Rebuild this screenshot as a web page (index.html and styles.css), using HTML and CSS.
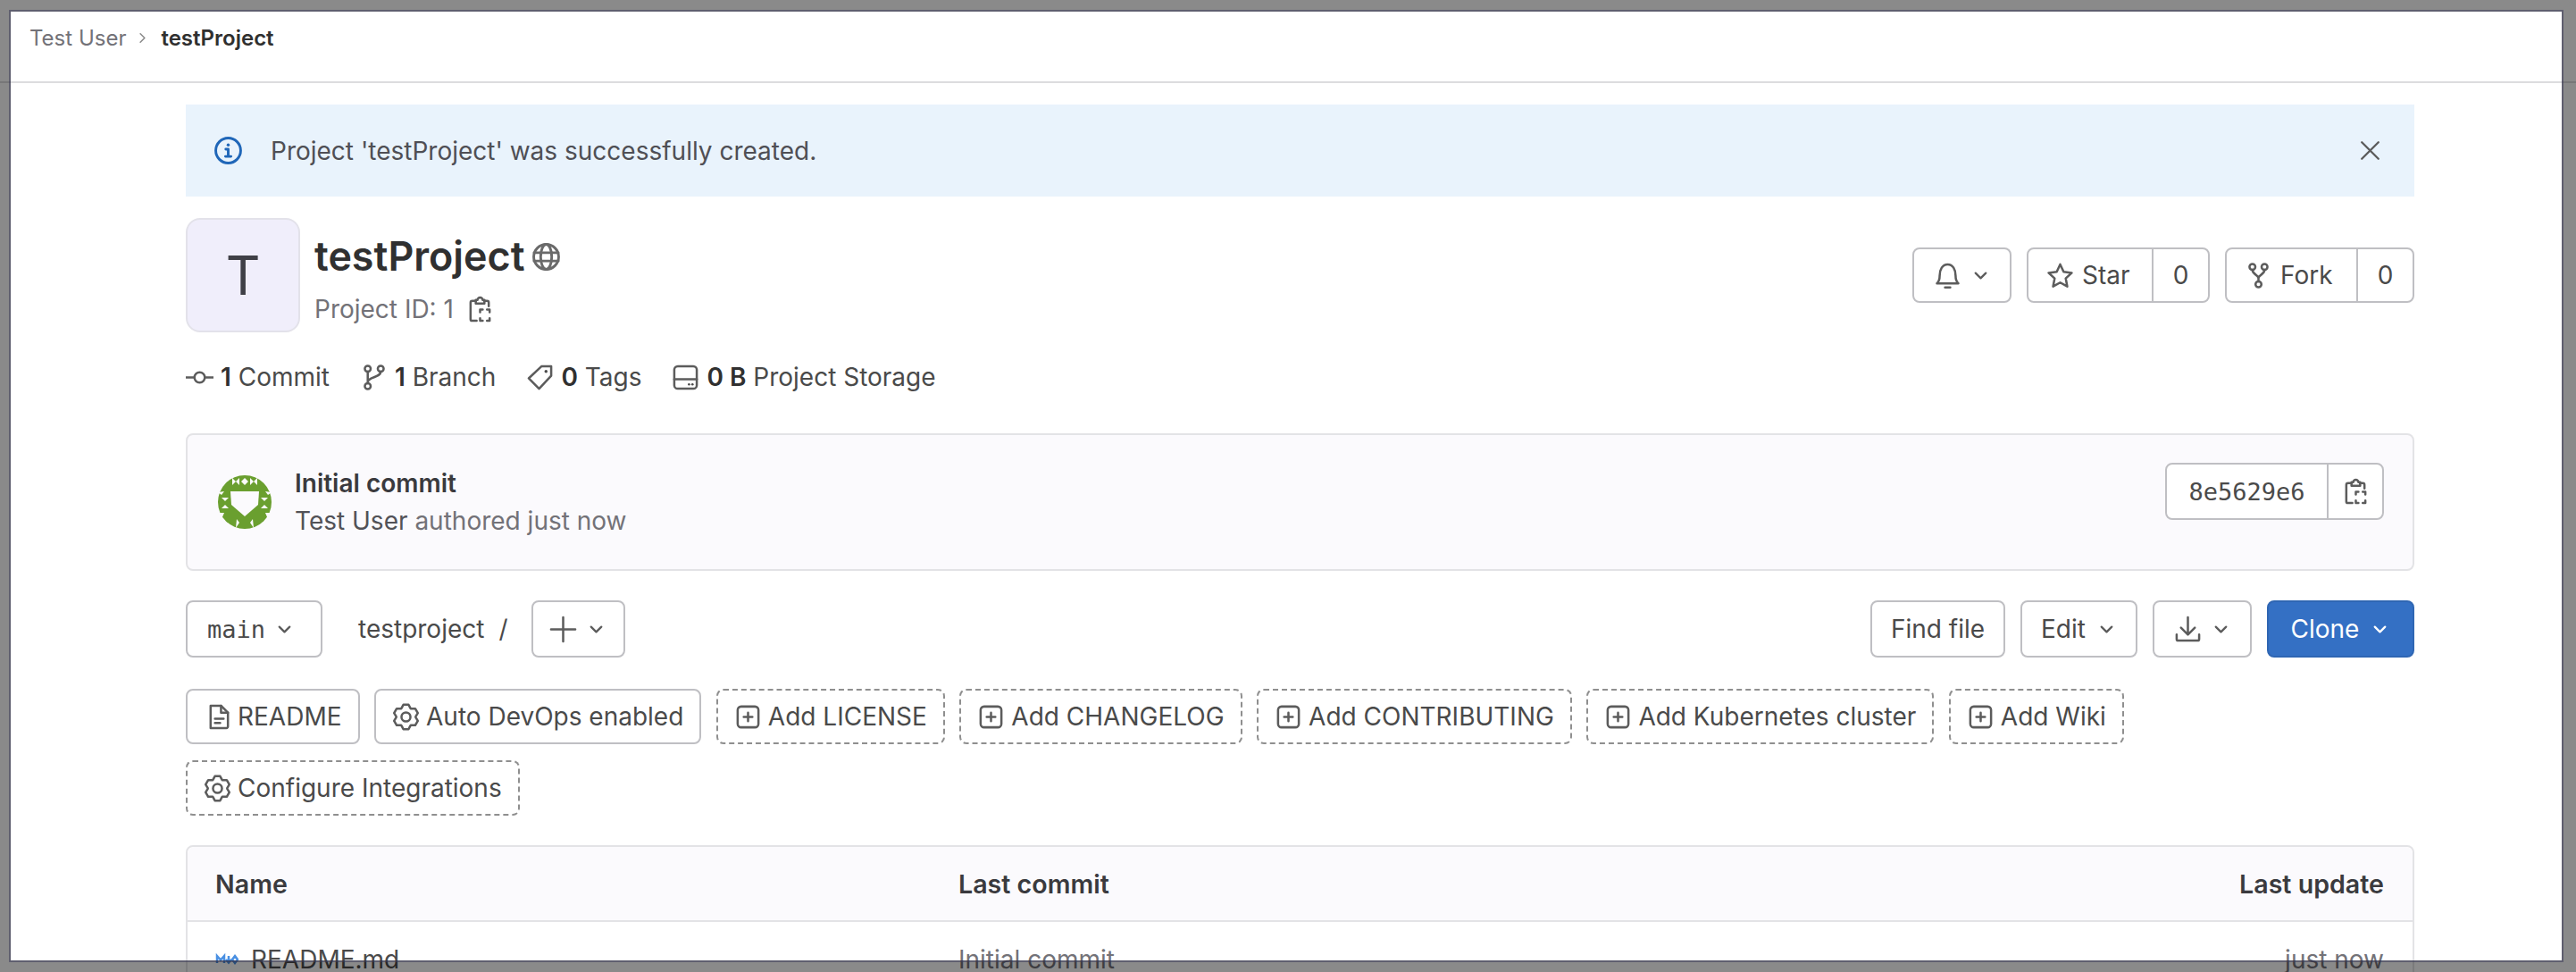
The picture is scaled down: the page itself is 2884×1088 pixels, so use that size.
FILE: index.html
```html
<!DOCTYPE html>
<html lang="en">

<head>
  <meta charset="UTF-8">
  <title>testProject</title>
  <link rel="stylesheet" href="styles.css">
</head>

<body>
  <svg class="sprite" xmlns="http://www.w3.org/2000/svg">
    <symbol id="i-chevron" viewBox="0 0 16 16"><path d="M4 6l4 4 4-4"/></symbol>
    <symbol id="i-chevron-right" viewBox="0 0 16 16"><path d="M6 4l4 4-4 4"/></symbol>
    <symbol id="i-info" viewBox="0 0 16 16"><circle cx="8" cy="8" r="7.2"/><path d="M6.6 7.2H8v4M6.4 11.4h3.2"/><circle class="dot" cx="8" cy="4.8" r=".9"/></symbol>
    <symbol id="i-close" viewBox="0 0 16 16"><path d="M2.5 2.5l11 11M13.5 2.5l-11 11"/></symbol>
    <symbol id="i-globe" viewBox="0 0 16 16"><circle cx="8" cy="8" r="7.2"/><ellipse cx="8" cy="8" rx="3.2" ry="7.2"/><path d="M1 5.6h14M1 10.4h14"/></symbol>
    <symbol id="i-copy" viewBox="0 0 16 16"><path d="M5.5 2.5h1a1.5 1.5 0 0 1 3 0h1v2h-5z"/><path d="M5.5 3H3.500a1 1 0 0 0-1 1v9.500a1 1 0 0 0 1 1H6M10.500 3H12a1 1 0 0 1 1 1v2"/><path d="M8 9.500V8h1.500M12 8h1.500v1.500M8 13v1.500h1.500M12 14.500h1.500V13"/></symbol>
    <symbol id="i-bell" viewBox="0 0 16 16"><path d="M1.800 12.500c1.200-1 1.600-2.200 1.600-4.500C3.400 4.500 5 1.500 8 1.500s4.600 3 4.600 6.500c0 2.300.4 3.500 1.600 4.500z"/><path d="M6.500 14.800h3"/></symbol>
    <symbol id="i-star" viewBox="0 0 16 16"><path d="M8 1.500l2 4.300 4.700.6-3.500 3.200.9 4.700L8 12l-4.100 2.300.9-4.700L1.300 6.400 6 5.800z"/></symbol>
    <symbol id="i-fork" viewBox="0 0 16 16"><circle cx="4.500" cy="3" r="1.700"/><circle cx="11.500" cy="3" r="1.700"/><circle cx="8" cy="13" r="1.700"/><path d="M4.500 4.700C4.500 7.500 8 7.500 8 9.500v1.800M11.500 4.700C11.500 7.500 8 7.500 8 9.500"/></symbol>
    <symbol id="i-commit" viewBox="0 0 16 16"><circle cx="8" cy="8" r="3"/><path d="M0 8h5M11 8h5"/></symbol>
    <symbol id="i-branch" viewBox="0 0 16 16"><circle cx="4.500" cy="3" r="1.700"/><circle cx="4.500" cy="13" r="1.700"/><circle cx="12" cy="3" r="1.700"/><path d="M4.500 4.700v6.600M12 4.700c0 3.500-7.500 2.800-7.500 6"/></symbol>
    <symbol id="i-tag" viewBox="0 0 16 16"><path d="M9 1.500h5.500V7L7.500 14.500 1.500 8.500z"/><circle class="dot" cx="11.500" cy="4.500" r=".9"/></symbol>
    <symbol id="i-storage" viewBox="0 0 16 16"><rect x="1.500" y="1.500" width="13" height="13" rx="2"/><path d="M1.500 9h13"/><circle class="dot" cx="10" cy="12" r=".7"/><circle class="dot" cx="12" cy="12" r=".7"/></symbol>
    <symbol id="i-doc" viewBox="0 0 16 16"><path d="M3 1.500h6l4 4v8a1 1 0 0 1-1 1H3z"/><path d="M9 1.500v4h4M5.500 9h5M5.500 11.500h3"/></symbol>
    <symbol id="i-gear" viewBox="0 0 16 16"><path d="M5.37 3.06L6.5.96h3l1.130 2.100.34.190 2.380-.070 1.500 2.600-1.250 2.020v.4l1.250 2.020-1.500 2.600-2.380-.070-.34.190-1.130 2.100h-3l-1.130-2.100-.34-.190-2.380.070-1.500-2.600 1.250-2.020v-.4L1.150 5.780l1.500-2.600 2.380.070z"/><circle cx="8" cy="8" r="2.600"/></symbol>
    <symbol id="i-add" viewBox="0 0 16 16"><rect x="2" y="2" width="12" height="12" rx="2"/><path d="M8 5.500v5M5.500 8h5"/></symbol>
    <symbol id="i-download" viewBox="0 0 16 16"><path d="M8 1v9.500M4 7l4 4 4-4M1.500 11v2.500a1 1 0 0 0 1 1h11a1 1 0 0 0 1-1V11"/></symbol>
    <symbol id="i-plus" viewBox="0 0 16 16"><path d="M8 1v14M1 8h14"/></symbol>
  </svg>

  <header class="top-bar">
    <span class="crumb">Test User</span>
    <svg class="icon crumb-sep"><use href="#i-chevron-right"/></svg>
    <strong class="crumb-current">testProject</strong>
  </header>

  <main class="content">
    <div class="alert">
      <svg class="icon alert-icon"><use href="#i-info"/></svg>
      <span class="alert-text">Project 'testProject' was successfully created.</span>
      <svg class="icon alert-close"><use href="#i-close"/></svg>
    </div>

    <section class="project-head">
      <div class="project-avatar">T</div>
      <div class="project-title">
        <h1>testProject <svg class="icon"><use href="#i-globe"/></svg></h1>
        <p>Project ID: 1 <svg class="icon"><use href="#i-copy"/></svg></p>
      </div>
      <div class="project-actions">
        <button class="btn bell-btn"><svg class="icon"><use href="#i-bell"/></svg><svg class="icon chev"><use href="#i-chevron"/></svg></button>
        <div class="btn-group star-group">
          <button class="btn"><svg class="icon"><use href="#i-star"/></svg>Star</button>
          <span class="btn count">0</span>
        </div>
        <div class="btn-group fork-group">
          <button class="btn"><svg class="icon"><use href="#i-fork"/></svg>Fork</button>
          <span class="btn count">0</span>
        </div>
      </div>
    </section>

    <ul class="stats">
      <li><svg class="icon"><use href="#i-commit"/></svg><b>1</b> Commit</li>
      <li><svg class="icon"><use href="#i-branch"/></svg><b>1</b> Branch</li>
      <li><svg class="icon"><use href="#i-tag"/></svg><b>0</b> Tags</li>
      <li><svg class="icon"><use href="#i-storage"/></svg><b>0 B</b> Project Storage</li>
    </ul>

    <section class="commit-box">
      <svg class="commit-avatar" viewBox="0 0 60 60">
        <circle class="ring" cx="30" cy="30" r="30"/>
        <!-- white parts of the identicon -->
        <path class="cut" d="M14 18h32l-1 15-15 13-15-13z"/>
        <path class="cut" d="M30 3l4 4-4 4-4-4zM16 3l4 4-4 4zM24 3l-4 4 4 4zM44 3l-4 4 4 4zM36 3l4 4-4 4z"/>
        <path class="cut" d="M4 25l4 4 4-4zM4 37l4-4 4 4zM56 25l-4 4-4-4zM56 37l-4-4-4 4z"/>
        <path class="cut" d="M0 19l7-1-3 4zM60 19l-7-1 3 4zM0 42l7 0-3 7zM60 42l-7 0 3 7zM21 49l3 4-4 6zM39 49l-3 4 4 6z"/>
      </svg>
      <div class="commit-info">
        <strong>Initial commit</strong>
        <p><span class="commit-author">Test User</span> authored just now</p>
      </div>
      <div class="btn-group sha-group">
        <span class="btn sha">8e5629e6</span>
        <button class="btn sha-copy"><svg class="icon"><use href="#i-copy"/></svg></button>
      </div>
    </section>

    <section class="repo-bar">
      <button class="btn mono-btn">main<svg class="icon chev"><use href="#i-chevron"/></svg></button>
      <span class="repo-path">testproject</span>
      <span class="repo-slash">/</span>
      <button class="btn plus-btn"><svg class="icon"><use href="#i-plus"/></svg><svg class="icon chev"><use href="#i-chevron"/></svg></button>
      <div class="repo-actions">
        <button class="btn find-btn">Find file</button>
        <button class="btn edit-btn">Edit<svg class="icon chev"><use href="#i-chevron"/></svg></button>
        <button class="btn dl-btn"><svg class="icon"><use href="#i-download"/></svg><svg class="icon chev"><use href="#i-chevron"/></svg></button>
        <button class="btn clone-btn">Clone<svg class="icon chev"><use href="#i-chevron"/></svg></button>
      </div>
    </section>

    <section class="shortcuts">
      <a class="btn pill readme"><svg class="icon"><use href="#i-doc"/></svg>README</a>
      <a class="btn pill"><svg class="icon"><use href="#i-gear"/></svg>Auto DevOps enabled</a>
      <a class="btn pill dashed"><svg class="icon"><use href="#i-add"/></svg>Add LICENSE</a>
      <a class="btn pill dashed"><svg class="icon"><use href="#i-add"/></svg>Add CHANGELOG</a>
      <a class="btn pill dashed"><svg class="icon"><use href="#i-add"/></svg>Add CONTRIBUTING</a>
      <a class="btn pill dashed"><svg class="icon"><use href="#i-add"/></svg>Add Kubernetes cluster</a>
      <a class="btn pill dashed"><svg class="icon"><use href="#i-add"/></svg>Add Wiki</a>
      <a class="btn pill dashed"><svg class="icon"><use href="#i-gear"/></svg>Configure Integrations</a>
    </section>

    <section class="file-table">
      <div class="file-row file-head">
        <span>Name</span>
        <span>Last commit</span>
        <span class="when">Last update</span>
      </div>
      <div class="file-row">
        <span class="file-name"><svg class="md-icon" viewBox="0 0 26 16"><path d="M2 12V4l4 4.500L10 4v8M15 4v6M12 8l3 3.500L18 8M22 4l3 4-3 4-3-4z"/></svg>README.md</span>
        <span class="muted">Initial commit</span>
        <span class="when muted">just now</span>
      </div>
    </section>
  </main>

  <div class="frame"></div>
</body>

</html>
```

FILE: styles.css
```css
* {
  box-sizing: border-box;
  margin: 0;
  padding: 0;
}

html,
body {
  width: 2884px;
  height: 1088px;
  overflow: hidden;
}

body {
  position: relative;
  background: white;
  color: #303030;
  font-family: Inter, "Noto Sans", sans-serif;
  font-size: 28px;
}

.sprite {
  display: none;
}

.icon {
  width: 31px;
  height: 31px;
  flex: none;
  fill: none;
  stroke: #5c5c5c;
  stroke-width: 1.3;
  stroke-linecap: round;
  stroke-linejoin: round;
}

.dot {
  fill: currentColor;
  stroke: none;
}

.chev {
  width: 23px;
  height: 23px;
  stroke-width: 1.6;
}

/* overlay of the grey window edge */
.frame {
  position: absolute;
  inset: 0;
  border-style: solid;
  border-width: 13px 16px 13px 12px;
  border-color: rgba(0, 0, 0, 0.46);
  pointer-events: none;
}

.frame::after {
  content: "";
  position: absolute;
  inset: -2px;
  border: 2px solid rgba(60, 60, 90, 0.55);
}

.top-bar {
  height: 93px;
  padding: 0 0 6px 33px;
  border-bottom: 2px solid #dcdcde;
  display: flex;
  align-items: center;
  font-size: 24px;
}

.crumb {
  color: #737278;
}

.crumb-sep {
  width: 19px;
  height: 19px;
  margin: 0 11px 0 9px;
  stroke: #8a8a8a;
}

.crumb-current {
  font-weight: 600;
  color: #303030;
}

.content {
  width: 2495px;
  margin-left: 208px;
}

.alert {
  height: 103px;
  margin-top: 24px;
  padding: 0 36px 0 32px;
  background: #e9f3fc;
  display: flex;
  align-items: center;
  color: #4f4f55;
}

.alert-icon {
  stroke: #1f66b8;
  color: #1f66b8;
  stroke-width: 1.5;
  margin-right: 32px;
}

.alert-close {
  width: 27px;
  height: 27px;
  margin-left: auto;
  stroke-width: 1.4;
}

.project-head {
  margin-top: 24px;
  display: flex;
}

.project-avatar {
  width: 128px;
  height: 128px;
  border: 2px solid #e3e2ea;
  border-radius: 16px;
  background: #f0eefb;
  display: flex;
  align-items: center;
  justify-content: center;
  font-size: 60px;
  color: #3f3f46;
}

.project-title {
  margin-left: 16px;
  padding-top: 14px;
}

.project-title h1 {
  display: flex;
  align-items: center;
  gap: 9px;
  font-size: 44.8px;
  font-weight: 600;
  line-height: 58px;
}

.project-title h1 .icon {
  stroke-width: 1.5;
  stroke: #6a6a6a;
}

.project-title p {
  display: flex;
  align-items: center;
  gap: 14px;
  margin-top: 13px;
  color: #737278;
}

.project-actions {
  margin-left: auto;
  padding-top: 33px;
  display: flex;
  gap: 17px;
}

.btn {
  height: 62px;
  padding: 0 20px;
  border: 2px solid #bfbfc3;
  border-radius: 8px;
  background: white;
  display: inline-flex;
  align-items: center;
  font: inherit;
  color: #4a4a4a;
}

.bell-btn {
  width: 111px;
  gap: 10px;
  justify-content: center;
  padding: 0;
}

.btn-group {
  display: flex;
}

.btn-group .btn:first-child {
  border-top-right-radius: 0;
  border-bottom-right-radius: 0;
}

.btn-group .btn:last-child {
  margin-left: -2px;
  border-top-left-radius: 0;
  border-bottom-left-radius: 0;
}

.btn-group .btn svg {
  margin-right: 9px;
}

.star-group .btn:first-child {
  width: 142px;
}

.fork-group .btn:first-child {
  width: 149px;
}

.count {
  width: 65px;
  justify-content: center;
  padding: 0;
}

.stats {
  margin-top: 30px;
  list-style: none;
  display: flex;
  gap: 34px;
  height: 40px;
  align-items: center;
  color: #4a4a4a;
}

.stats li {
  display: flex;
  align-items: center;
  white-space: pre;
}

.stats li svg {
  margin-right: 8px;
}

.stats b {
  font-weight: 600;
  color: #303030;
}

.commit-box {
  height: 154px;
  margin-top: 43px;
  padding: 0 32px 0 34px;
  border: 2px solid #e3e3e6;
  border-radius: 8px;
  background: #fbfafd;
  display: flex;
  align-items: center;
}

.commit-avatar {
  width: 60px;
  height: 60px;
  flex: none;
}

.ring {
  fill: #6a9f2f;
}

.cut {
  fill: #fbfafd;
}

.commit-info {
  margin-left: 26px;
  color: #737278;
}

.commit-info strong {
  display: block;
  font-weight: 600;
  color: #3a3a3e;
}

.commit-info p {
  margin-top: 8px;
}

.commit-author {
  color: #525257;
}

.sha-group {
  margin-left: auto;
  align-self: flex-start;
  margin-top: 31px;
}

.sha {
  width: 183px;
  height: 64px;
  justify-content: center;
  padding: 0;
  font-family: "DejaVu Sans Mono", monospace;
  font-size: 27px;
}

.sha-copy {
  width: 64px;
  height: 64px;
  justify-content: center;
  padding: 0;
}

.sha-copy svg {
  margin: 0 !important;
}

.repo-bar {
  margin-top: 33px;
  display: flex;
  align-items: center;
  color: #4a4a4a;
}

.repo-bar .btn {
  height: 64px;
}

.mono-btn {
  width: 153px;
  gap: 10px;
  padding: 0 0 0 22px;
  font-family: "DejaVu Sans Mono", monospace;
  font-size: 27px;
}

.repo-path {
  margin-left: 40px;
}

.repo-slash {
  margin-left: 16px;
}

.plus-btn {
  width: 105px;
  margin-left: 26px;
  padding: 0;
  justify-content: center;
  gap: 10px;
}

.repo-actions {
  margin-left: auto;
  display: flex;
  gap: 17px;
}

.find-btn {
  width: 151px;
  justify-content: center;
  padding: 0;
}

.edit-btn {
  width: 131px;
  justify-content: center;
  gap: 12px;
  padding: 0;
}

.dl-btn {
  width: 111px;
  justify-content: center;
  gap: 10px;
  padding: 0;
}

.clone-btn {
  width: 165px;
  justify-content: center;
  gap: 12px;
  padding: 0;
  background: #3470c4;
  border-color: #2f66b3;
  color: white;
}

.clone-btn .icon {
  stroke: white;
}

.shortcuts {
  margin-top: 35px;
  display: flex;
  flex-wrap: wrap;
  gap: 18px 16.5px;
}

.pill {
  padding: 0 18px;
  gap: 7px;
  white-space: nowrap;
}

.readme {
  padding: 0 18px 0 20px;
  gap: 5px;
}

.dashed {
  border: 2px dashed #8f8f8f;
}

.file-table {
  margin-top: 33px;
  border: 2px solid #e3e3e6;
  border-radius: 8px 8px 0 0;
}

.file-row {
  display: grid;
  grid-template-columns: 832px 1fr 300px;
  padding: 0 32px 0 31px;
  height: 84px;
  align-items: center;
}

.file-head {
  background: #fbfafd;
  border-bottom: 2px solid #e3e3e6;
  border-radius: 8px 8px 0 0;
  font-size: 28.6px;
  font-weight: 600;
  color: #3a3a3e;
}

.when {
  text-align: right;
}

.muted {
  color: #737278;
}

.file-name {
  display: flex;
  align-items: center;
  gap: 14px;
  color: #4a4a4a;
}

.md-icon {
  width: 26px;
  height: 16px;
  fill: none;
  stroke: #4a90e2;
  stroke-width: 2.5;
}
```
